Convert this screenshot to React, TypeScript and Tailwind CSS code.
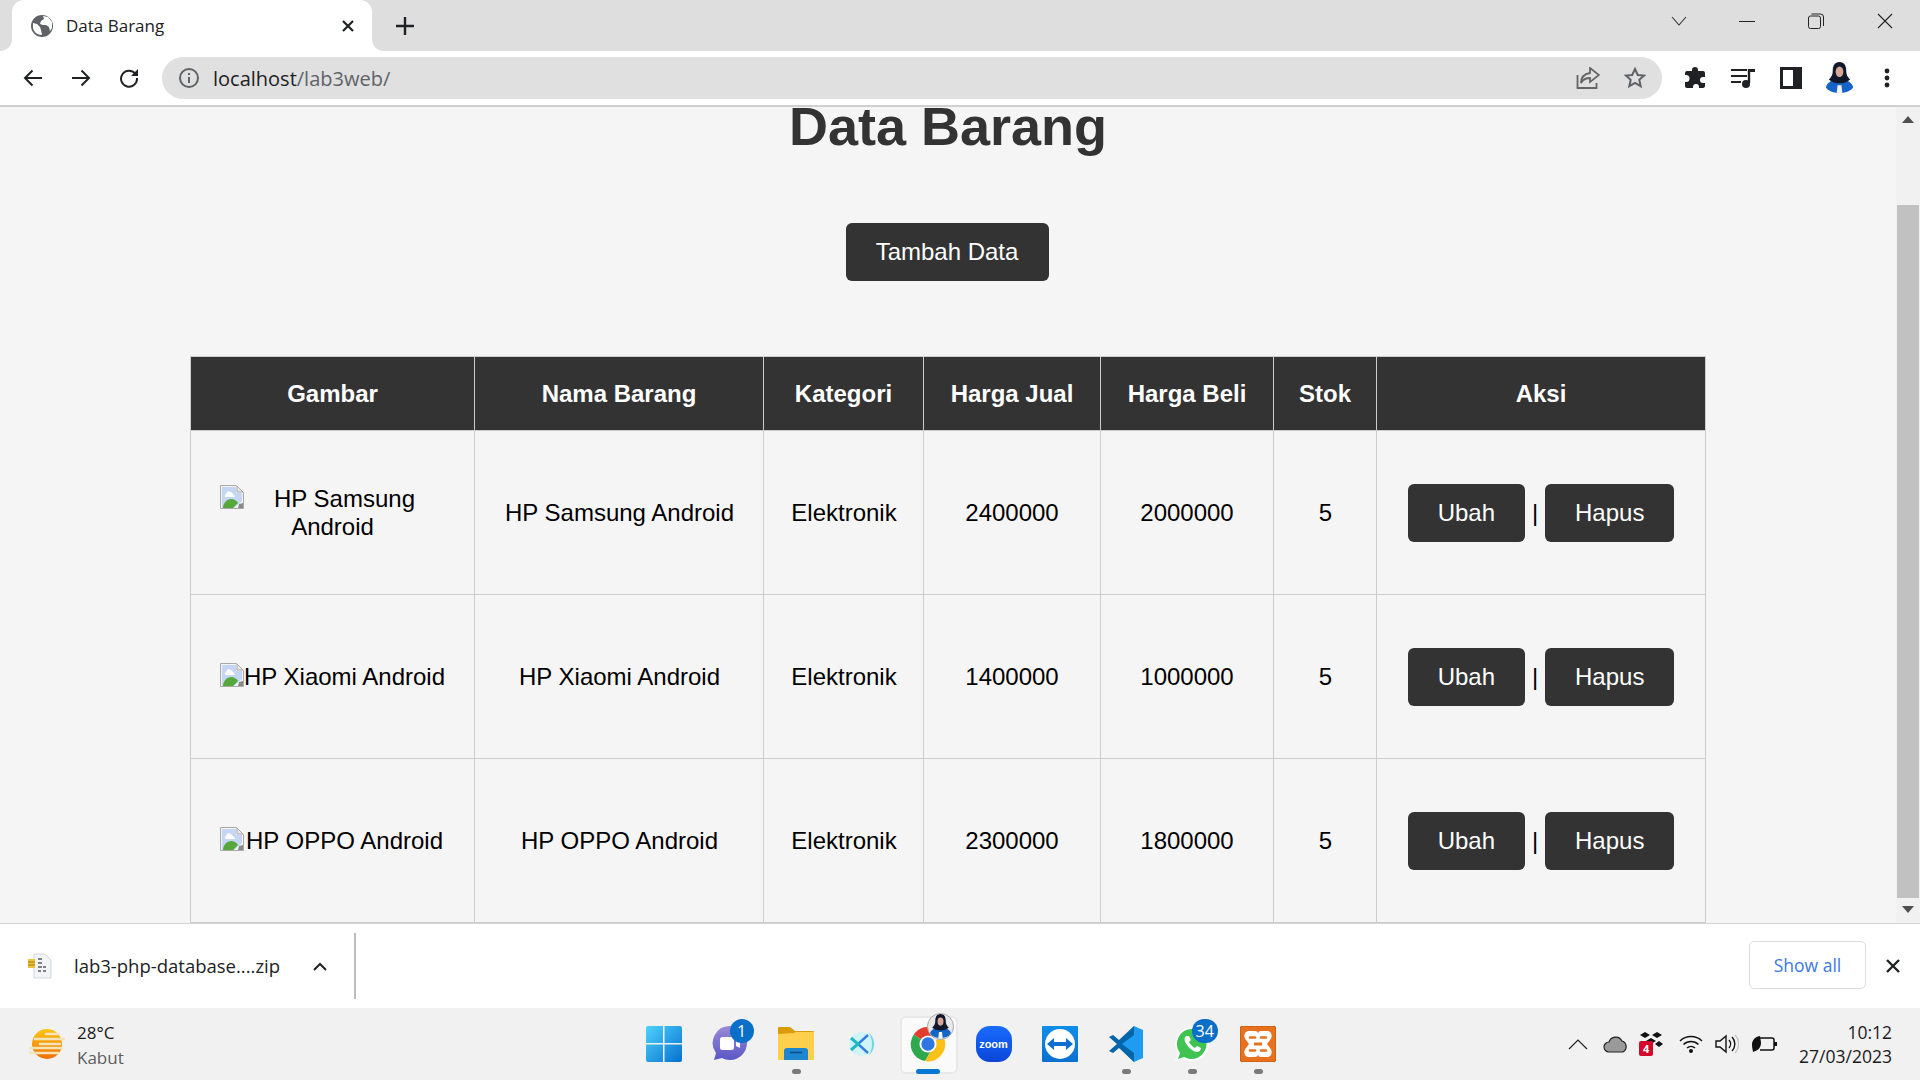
import type { ReactNode } from "react";

const uiFont = "font-['Open_Sans','Noto_Sans',sans-serif]";

const rows = [
  { name: "HP Samsung Android", jual: "2400000", beli: "2000000" },
  { name: "HP Xiaomi Android", jual: "1400000", beli: "1000000" },
  { name: "HP OPPO Android", jual: "2300000", beli: "1800000" },
];

function Globe() {
  return (
    <svg viewBox="0 0 22 22" className="w-[22px] h-[22px]">
      <circle cx="11" cy="11" r="11" fill="#5f6368" />
      <path d="M2 8l4 1 3 3 1 3 1 5c-5 0-8-3-9-7zM12 1l1 3-3 2-1 3 3 1 3 0 3 2 1 4 2-3 0-6-4-5z" fill="#fff" />
    </svg>
  );
}

function BrokenImage() {
  return (
    <svg viewBox="0 0 24 24" className="float-left w-6 h-6">
      <path d="M0.500 0.500h16l7 7v16h-23z" fill="#f4f4f4" stroke="#a9a9a9" />
      <path d="M2 2h14v6h6v8l-8 7H2z" fill="#c4d6f4" />
      <path d="M5 10l3-4 3 1 3 3 1 2H5z" fill="#fff" />
      <path d="M3 23c0-5 4-9 8-9 3 0 6 2 7 4l-5 5z" fill="#57a83a" />
      <path d="M17 1v6h6z" fill="#e8e8e8" stroke="#a9a9a9" />
      <path d="M19 19l4-1v5h-5z" fill="#8a8a8a" />
    </svg>
  );
}

function Avatar({ size }: { size: number }) {
  return (
    <svg viewBox="0 0 28 32" width={size} height={size * 1.15}>
      <path d="M0 26c1-5 6-7 9-8h10c3 1 8 3 9 8-1 3-7 6-14 6S1 29 0 26z" fill="#1565c8" />
      <path d="M12 24h4l1 8h-6z" fill="#f4f4f4" />
      <path d="M14 0c5 0 7 4 7 9 0 4 1 6 4 9-3 3-7 4-11 4S6 21 3 18c3-3 4-5 4-9 0-5 2-9 7-9z" fill="#10192c" />
      <ellipse cx="14" cy="10" rx="4" ry="5.500" fill="#d8a896" />
    </svg>
  );
}

function Zip() {
  return (
    <svg viewBox="0 0 24 26" className="w-6 h-[26px]">
      <path d="M6 1h11l6 6v18H6z" fill="#f2f4f7" stroke="#d3d6da" />
      <path d="M10 5h4v2h-4zM10 9h4v2h-4zM10 13h4v2h-4zM10 17h3v2h-3zM15 17h3v2h-3zM15 13h3v2h-3z" fill="#7d8288" />
      <path d="M0 6h7v9H0z" fill="#eec23a" />
      <path d="M0 9h7M0 12h7" stroke="#a97e12" />
    </svg>
  );
}

function Weather() {
  return (
    <svg viewBox="0 0 36 32" className="w-9 h-8">
      <defs>
        <linearGradient id="sun" x1="0" y1="0" x2="0" y2="1">
          <stop offset="0" stopColor="#fdc413" />
          <stop offset="1" stopColor="#ee6f04" />
        </linearGradient>
      </defs>
      <circle cx="18" cy="16" r="15" fill="url(#sun)" />
      <g stroke="#f3e3b9" strokeWidth="2.600" strokeLinecap="round">
        <path d="M17 6h12M6 11h30M11 16h20M1 20h32M1 25h28" />
      </g>
    </svg>
  );
}

function WinLogo() {
  return (
    <svg viewBox="0 0 36 36" className="w-9 h-9">
      <defs>
        <linearGradient id="win" x1="0" y1="0" x2="1" y2="1">
          <stop offset="0" stopColor="#4fd2fb" />
          <stop offset="1" stopColor="#0670cf" />
        </linearGradient>
      </defs>
      <path d="M0 2a2 2 0 012-2h15v17H0zM18.500 0H34a2 2 0 012 2v15H18.500zM0 18.500h17V36H2a2 2 0 01-2-2zM18.500 18.500H36V34a2 2 0 01-2 2H18.500z" fill="url(#win)" />
    </svg>
  );
}

function Teams() {
  return (
    <svg viewBox="0 0 36 36" className="w-9 h-9">
      <defs>
        <linearGradient id="teams" x1="0" y1="0" x2="0" y2="1">
          <stop offset="0" stopColor="#9b8bd6" />
          <stop offset="1" stopColor="#5a57c6" />
        </linearGradient>
      </defs>
      <path d="M18 0a17 17 0 110 34c-3 0-6-1-8-2l-8 2 2-7A17 17 0 0118 0z" fill="url(#teams)" />
      <rect x="8" y="11" width="14" height="13" rx="2.500" fill="#fff" />
      <path d="M24 15l4-2v9l-4-2z" fill="#fff" />
    </svg>
  );
}

function Folder() {
  return (
    <svg viewBox="0 0 36 36" className="w-9 h-9">
      <path d="M0 2a1 1 0 011-1h11l5 4h18a1 1 0 011 1v8H0z" fill="#d99c06" />
      <path d="M0 8l16-1 2-1h18v27a1 1 0 01-1 1H1a1 1 0 01-1-1z" fill="#fdcf4d" />
      <path d="M6 25a3 3 0 013-3h18a3 3 0 013 3v9H6z" fill="#1d86cf" />
      <path d="M12 26.500h12" stroke="#0d4f8c" strokeWidth="1.600" />
    </svg>
  );
}

function Capcut() {
  return (
    <svg viewBox="0 0 36 36" className="w-9 h-9">
      <ellipse cx="18" cy="18" rx="13" ry="12" fill="#d2f3f5" />
      <path d="M25 7c3 2 5 7 5 11s-2 9-5 11c2-3 3-7 3-11s-1-8-3-11z" fill="#6fd6e0" />
      <path d="M24 9l-10 9 10 9" fill="none" stroke="#2f7fe8" strokeWidth="2.400" />
      <path d="M7 12l7 6-7 6" fill="none" stroke="#20b8c8" strokeWidth="3" />
    </svg>
  );
}

function ChromeLogo() {
  return (
    <span className="relative block w-[38px] h-[38px]">
      <svg viewBox="0 0 40 40" className="w-[38px] h-[38px]">
        <path d="M20 20L5 10A18 18 0 0136 12H20z" fill="#e33b2e" />
        <path d="M20 20L5 10A18 18 0 0017 38l8-14z" fill="#2fa84f" />
        <path d="M20 20l16-8a18 18 0 01-19 26l8-14z" fill="#fbc116" />
        <circle cx="20" cy="20" r="9" fill="#fff" />
        <circle cx="20" cy="20" r="7" fill="#2f76e4" />
      </svg>
      <span className="absolute -top-[12px] -right-[7px] w-[27px] h-[27px] rounded-full bg-[#e8e8e8] border border-[#aaa] flex items-center justify-center overflow-hidden">
        <Avatar size={21} />
      </span>
    </span>
  );
}

function Zoom() {
  return (
    <span className="w-9 h-9 rounded-[14px] bg-gradient-to-b from-[#1a6cff] to-[#0a45d8] flex items-center justify-center text-white text-[11px] font-bold font-['Liberation_Sans',sans-serif]">
      zoom
    </span>
  );
}

function TeamViewer() {
  return (
    <svg viewBox="0 0 36 36" className="w-9 h-9">
      <defs>
        <linearGradient id="tv" x1="0" y1="0" x2="0" y2="1">
          <stop offset="0" stopColor="#0e8ee9" />
          <stop offset="1" stopColor="#0a6fd0" />
        </linearGradient>
      </defs>
      <rect width="36" height="36" rx="1" fill="url(#tv)" />
      <circle cx="18" cy="18" r="15" fill="#fff" />
      <path d="M5 18l7-6v4h12v-4l7 6-7 6v-4H12v4z" fill="#0e6fd0" />
    </svg>
  );
}

function VsCode() {
  return (
    <svg viewBox="0 0 36 36" className="w-9 h-9">
      <path d="M26 0l9 4v28l-9 4L10 20z" fill="#1f9cf0" />
      <path d="M26 0v9L14 18l12 9v9L11 22l-6 5-4-2 8-7-8-7 4-2 6 5z" fill="#0065a9" />
    </svg>
  );
}

function WhatsApp() {
  return (
    <svg viewBox="0 0 36 36" className="w-9 h-9">
      <path d="M18 1a17 17 0 11-8 32l-9 2 3-8A17 17 0 0118 1z" fill="#fff" />
      <path d="M18 3a15 15 0 11-8 28l-6 2 2-6A15 15 0 0118 3z" fill="#3fc351" />
      <path d="M12 10c-2 2-2 5 1 9s7 7 10 7c2 0 4-2 4-4l-4-2-2 2c-2-1-5-4-6-6l2-2-2-4z" fill="#fff" />
    </svg>
  );
}

function Xampp() {
  return (
    <svg viewBox="0 0 36 36" className="w-9 h-9">
      <rect width="36" height="36" rx="3" fill="#e8711d" stroke="#b9560f" />
      <path d="M9 5h6c2 0 3 1 3 3 0-2 1-3 3-3h6c5 0 6 6 3 9l-3 4 3 4c3 3 2 9-3 9h-6c-2 0-3-1-3-3 0 2-1 3-3 3H9c-5 0-6-6-3-9l3-4-3-4C3 11 4 5 9 5z" fill="#fff" />
      <path d="M10 11.500h5M21 11.500h5M10 24.500h5M21 24.500h5" stroke="#e8711d" strokeWidth="2.600" strokeLinecap="round" />
      <path d="M14 18h8" stroke="#e8711d" strokeWidth="3" />
    </svg>
  );
}

function Badge({ children }: { children: ReactNode }) {
  return (
    <span className="absolute -top-[7px] left-[18px] min-w-6 h-6 px-[4px] rounded-full bg-[#0a6fc9] text-white text-[16px] flex items-center justify-center">
      {children}
    </span>
  );
}

const dock: { icon: ReactNode; badge?: string; dot?: boolean; active?: boolean }[] = [
  { icon: <WinLogo /> },
  { icon: <Teams />, badge: "1" },
  { icon: <Folder />, dot: true },
  { icon: <Capcut /> },
  { icon: <ChromeLogo />, active: true },
  { icon: <Zoom /> },
  { icon: <TeamViewer /> },
  { icon: <VsCode />, dot: true },
  { icon: <WhatsApp />, badge: "34", dot: true },
  { icon: <Xampp />, dot: true },
];

function Toolbtn({ children }: { children: ReactNode }) {
  return <span className="w-12 h-[54px] flex items-center justify-center shrink-0">{children}</span>;
}

export default function App() {
  return (
    <div className={`h-screen w-full flex flex-col overflow-hidden bg-white ${uiFont}`}>
      {/* tab strip */}
      <div className="h-[51px] bg-[#dedede] flex shrink-0">
        <div className="relative w-[360px] ml-3 bg-white rounded-t-[12px] flex items-center pl-[19px] pr-[17px]">
          <svg viewBox="0 0 12 12" className="absolute bottom-0 -left-3 w-3 h-3">
            <path d="M12 0v12H0C7 12 12 7 12 0z" fill="#fff" />
          </svg>
          <svg viewBox="0 0 12 12" className="absolute bottom-0 -right-3 w-3 h-3">
            <path d="M0 0v12h12C5 12 0 7 0 0z" fill="#fff" />
          </svg>
          <Globe />
          <span className="ml-[13px] text-[17px] text-[#202124] flex-1">Data Barang</span>
          <svg viewBox="0 0 14 14" className="w-[14px] h-[14px]">
            <path d="M2 2l10 10M12 2L2 12" stroke="#202124" strokeWidth="2.200" />
          </svg>
        </div>
        <svg viewBox="0 0 20 20" className="w-5 h-5 ml-[23px] mt-[16px]">
          <path d="M10 1v18M1 10h18" stroke="#202124" strokeWidth="2.400" />
        </svg>
        <div className="ml-auto flex items-center h-[42px] text-[#202124]">
          <svg viewBox="0 0 16 10" className="w-4 h-[10px] mr-[52px]">
            <path d="M1 1l7 8 7-8" fill="none" stroke="#333" strokeWidth="1.100" />
          </svg>
          <span className="w-4 h-px bg-[#222] mr-[53px]" />
          <svg viewBox="0 0 16 16" className="w-4 h-4 mr-[53px]">
            <rect x="0.500" y="3" width="12" height="12.500" rx="2" fill="none" stroke="#222" />
            <path d="M3.500 1h9a3 3 0 013 3v9" fill="none" stroke="#222" />
          </svg>
          <svg viewBox="0 0 16 16" className="w-4 h-4 mr-[27px]">
            <path d="M1 1l14 14M15 1L1 15" stroke="#222" strokeWidth="1.100" />
          </svg>
        </div>
      </div>

      {/* toolbar */}
      <div className="h-[54px] bg-white flex items-center px-[9px] shrink-0">
        <Toolbtn>
          <svg viewBox="0 0 20 20" className="w-5 h-5">
            <path d="M19 10H2M9.500 2.500L2 10l7.500 7.500" fill="none" stroke="#202124" strokeWidth="2" />
          </svg>
        </Toolbtn>
        <Toolbtn>
          <svg viewBox="0 0 20 20" className="w-5 h-5">
            <path d="M1 10h17M10.500 2.500L18 10l-7.500 7.500" fill="none" stroke="#202124" strokeWidth="2" />
          </svg>
        </Toolbtn>
        <Toolbtn>
          <svg viewBox="0 0 20 20" className="w-5 h-5">
            <path d="M16.500 6A8 8 0 1018 10" fill="none" stroke="#202124" strokeWidth="2" />
            <path d="M19 1v7h-7z" fill="#202124" />
          </svg>
        </Toolbtn>
        <div className="ml-[9px] w-[1500px] h-[42px] rounded-full bg-[#e0e0e0] flex items-center px-4">
          <svg viewBox="0 0 22 22" className="w-[22px] h-[22px]">
            <circle cx="11" cy="11" r="9" fill="none" stroke="#5f6368" strokeWidth="2" />
            <path d="M11 10v6M11 6v2" stroke="#5f6368" strokeWidth="2" />
          </svg>
          <span className="ml-[13px] pt-px text-[20px] text-[#202124] flex-1">
            localhost<span className="text-[#5f6368]">/lab3web/</span>
          </span>
          <svg viewBox="0 0 24 22" className="w-6 h-[22px] mr-6">
            <path d="M1.500 8v13h19v-5" fill="none" stroke="#666" strokeWidth="1.800" />
            <path d="M14 1l9 7-9 7v-4c-4 0-7 1-9 5 0-6 3-9 9-10z" fill="none" stroke="#666" strokeWidth="1.800" />
          </svg>
          <svg viewBox="0 0 22 22" className="w-[22px] h-[22px]">
            <path d="M11 2l2.800 6 6.200.6-4.700 4.200 1.400 6.400L11 16l-5.700 3.200 1.400-6.400L2 8.600 8.200 8z" fill="none" stroke="#5f6368" strokeWidth="2" />
          </svg>
        </div>
        <span className="ml-[9px] flex items-center">
          <Toolbtn>
            <svg viewBox="0 0 22 22" className="w-[22px] h-[22px]">
              <path d="M8 3a3 3 0 016 0v1h5a2 2 0 012 2v4h-2a3 3 0 000 6h2v3a2 2 0 01-2 2h-4v-1a3 3 0 00-6 0v1H3a2 2 0 01-2-2v-4h1a3.500 3.500 0 000-7H1V6a2 2 0 012-2h5z" fill="#202124" />
            </svg>
          </Toolbtn>
          <Toolbtn>
            <svg viewBox="0 0 24 22" className="w-6 h-[22px]">
              <path d="M0 3h16M0 9h16M0 15h10" stroke="#202124" strokeWidth="2" />
              <path d="M18 2v14" stroke="#202124" strokeWidth="2.400" />
              <path d="M18 2h6v3h-6z" fill="#202124" />
              <circle cx="15" cy="17" r="4" fill="#202124" />
            </svg>
          </Toolbtn>
          <Toolbtn>
            <svg viewBox="0 0 22 22" className="w-[22px] h-[22px]">
              <path d="M0 0h22v22H0z" fill="#202124" />
              <path d="M3 3h10v16H3z" fill="#fff" />
            </svg>
          </Toolbtn>
          <Toolbtn>
            <Avatar size={27} />
          </Toolbtn>
          <Toolbtn>
            <svg viewBox="0 0 6 22" className="w-[6px] h-[22px]">
              <circle cx="3" cy="4" r="2.400" fill="#202124" />
              <circle cx="3" cy="11" r="2.400" fill="#202124" />
              <circle cx="3" cy="18" r="2.400" fill="#202124" />
            </svg>
          </Toolbtn>
        </span>
      </div>
      <div className="h-[2px] bg-[#d0d0d0] shrink-0" />

      {/* page */}
      <div className="flex-1 min-h-0 flex bg-[#f5f5f5]">
        <main className="flex-1 min-w-0 overflow-hidden font-['Liberation_Sans',Arial,sans-serif] text-black">
          <h1 className="-mt-[10px] h-[58px] text-center text-[54px] leading-[58px] font-bold text-[#333]">
            Data Barang
          </h1>
          <div className="flex justify-center mt-[68px] pr-[2px]">
            <a className="h-[58px] w-[203px] rounded-[6px] bg-[#333] text-white text-[24px] flex items-center justify-center">
              Tambah Data
            </a>
          </div>
          <table className="mt-[75px] mx-auto w-[1515px] table-fixed border-collapse text-center text-[24px] leading-[28px]">
            <colgroup>
              <col className="w-[284px]" />
              <col className="w-[289px]" />
              <col className="w-[160px]" />
              <col className="w-[177px]" />
              <col className="w-[173px]" />
              <col className="w-[103px]" />
              <col className="w-[329px]" />
            </colgroup>
            <thead>
              <tr className="h-[74px] bg-[#333] text-white">
                {["Gambar", "Nama Barang", "Kategori", "Harga Jual", "Harga Beli", "Stok", "Aksi"].map((h) => (
                  <th key={h} className="border border-[#ccc] font-bold">
                    {h}
                  </th>
                ))}
              </tr>
            </thead>
            <tbody>
              {rows.map((r) => (
                <tr key={r.name} className="h-[164px]">
                  <td className="border border-[#ccc] px-[29px]">
                    <BrokenImage />
                    {r.name}
                  </td>
                  <td className="border border-[#ccc] pl-px">{r.name}</td>
                  <td className="border border-[#ccc] pl-px">Elektronik</td>
                  <td className="border border-[#ccc]">{r.jual}</td>
                  <td className="border border-[#ccc]">{r.beli}</td>
                  <td className="border border-[#ccc] pl-px">5</td>
                  <td className="border border-[#ccc]">
                    <div className="flex items-center justify-center">
                      <a className="h-[58px] px-[30px] rounded-[6px] bg-[#333] text-white flex items-center">Ubah</a>
                      <span className="w-5 text-center">|</span>
                      <a className="h-[58px] px-[30px] rounded-[6px] bg-[#333] text-white flex items-center">Hapus</a>
                    </div>
                  </td>
                </tr>
              ))}
            </tbody>
          </table>
        </main>
        {/* scrollbar */}
        <div className="w-6 shrink-0 bg-[#f1f1f1] flex flex-col items-center">
          <svg viewBox="0 0 12 7" className="w-3 h-[7px] mt-[9px]">
            <path d="M0 7l6-7 6 7z" fill="#505050" />
          </svg>
          <div className="w-[22px] h-[693px] bg-[#c1c1c1] mt-[82px]" />
          <svg viewBox="0 0 12 7" className="w-3 h-[7px] mt-[8px]">
            <path d="M0 0l6 7 6-7z" fill="#505050" />
          </svg>
        </div>
      </div>

      {/* download bar */}
      <div className="h-[85px] bg-white border-t border-[#d5d5d5] flex items-center shrink-0 pl-[28px]">
        <Zip />
        <span className="ml-[22px] w-[212px] whitespace-nowrap text-[18.500px] text-[#202124]">lab3-php-database....zip</span>
        <svg viewBox="0 0 14 9" className="w-[14px] h-[9px] ml-[27px]">
          <path d="M1 8l6-6 6 6" fill="none" stroke="#202124" strokeWidth="2" />
        </svg>
        <span className="w-[2px] h-[66px] bg-[#bdbdbd] ml-[27px]" />
        <a className="ml-auto mb-[2px] w-[117px] h-12 rounded-[5px] border border-[#dadce0] flex items-center justify-center text-[#3b78e7] text-[17.500px]">
          Show all
        </a>
        <svg viewBox="0 0 14 14" className="w-[14px] h-[14px] ml-5 mr-5">
          <path d="M1 1l12 12M13 1L1 13" stroke="#202124" strokeWidth="2.400" />
        </svg>
      </div>

      {/* taskbar */}
      <div className="h-[72px] bg-[#f1f1f1] grid grid-cols-[1fr_auto_1fr] items-center shrink-0">
        <div className="flex items-center pl-[29px]">
          <Weather />
          <div className="ml-3 pt-[2px] text-[17px] leading-[25px]">
            <div className="text-[#1b1b1b]">28°C</div>
            <div className="text-[#5d5d5d]">Kabut</div>
          </div>
        </div>
        <div className="flex ml-px">
          {dock.map((d, i) => (
            <div key={i} className="relative w-[66px] h-[72px] flex items-center justify-center">
              {d.active && (
                <span className="absolute left-[5px] top-[8px] w-[58px] h-[58px] rounded-[6px] bg-[#fafafa] border-2 border-[#e8e8e8]" />
              )}
              <span className="relative">
                {d.icon}
                {d.badge && <Badge>{d.badge}</Badge>}
              </span>
              {d.dot && <span className="absolute left-[29px] bottom-[6px] w-[9px] h-[5px] rounded-full bg-[#7a7a7a]" />}
              {d.active && <span className="absolute left-[21px] bottom-[6px] w-6 h-[5px] rounded-full bg-[#0078d4]" />}
            </div>
          ))}
        </div>
        <div className="flex items-center justify-end pr-[28px]">
          <svg viewBox="0 0 20 12" className="w-5 h-3 mr-[15px]">
            <path d="M1 11l9-9 9 9" fill="none" stroke="#222" strokeWidth="1.200" />
          </svg>
          <svg viewBox="0 0 26 18" className="w-[26px] h-[18px] mr-[10px]">
            <path d="M6 17a5 5 0 010-10 7 7 0 0113-1 6 6 0 011 11z" fill="#9a9a9a" stroke="#222" strokeWidth="1.200" />
          </svg>
          <span className="relative w-6 h-[24px] mr-[16px]">
            <svg viewBox="0 0 24 24" className="w-6 h-6">
              <path d="M6 0l5 3-5 3-5-3zM18 0l5 3-5 3-5-3zM12 6l5 3-5 3-5-3zM20 9l4 3-4 3-4-3z" fill="#111" />
            </svg>
            <span className="absolute left-0 bottom-0 w-[14px] h-[15px] rounded-[2px] bg-[#d4082a] text-white text-[11px] font-bold leading-[15px] text-center">
              4
            </span>
          </span>
          <svg viewBox="0 0 24 18" className="w-6 h-[18px] mr-[12px]">
            <path d="M1 6a16 16 0 0122 0M4.500 9.500a11 11 0 0115 0M8 13a6 6 0 018 0" fill="none" stroke="#111" strokeWidth="1.500" />
            <circle cx="12" cy="16" r="2" fill="#111" />
          </svg>
          <svg viewBox="0 0 24 20" className="w-6 h-5 mr-[12px]">
            <path d="M1 7h4l6-5v16l-6-5H1z" fill="none" stroke="#111" strokeWidth="1.400" />
            <path d="M14 6a6 6 0 010 8M17 3a10 10 0 010 14" fill="none" stroke="#111" strokeWidth="1.400" />
            <path d="M20 1a13 13 0 010 18" fill="none" stroke="#c4c4c4" strokeWidth="1.400" />
          </svg>
          <svg viewBox="0 0 26 18" className="w-[26px] h-[18px] mr-[22px]">
            <path d="M9 3h12a2 2 0 012 2v8a2 2 0 01-2 2H9" fill="none" stroke="#111" strokeWidth="1.500" />
            <path d="M23 7h3v4h-3z" fill="#111" />
            <path d="M9 1C3 2 1 6 1 10c0 3 1 6 1 7 3-1 8-3 8-9 0-3-1-5-1-7z" fill="#111" />
          </svg>
          <div className="text-[17.500px] leading-6 text-right text-[#1b1b1b]">
            <div>10:12</div>
            <div>27/03/2023</div>
          </div>
        </div>
      </div>
    </div>
  );
}
